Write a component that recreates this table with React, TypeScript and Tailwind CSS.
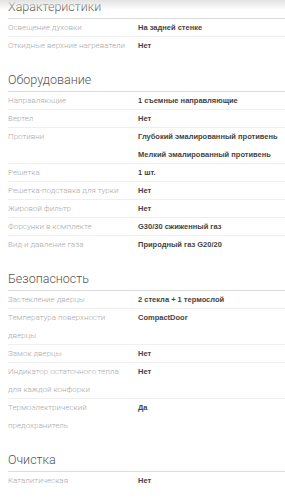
import React from "react";

type Row = { label: string[]; value: string[] };
type Section = { title: string; rows: Row[] };

const sections: Section[] = [
  {
    title: "Характеристики",
    rows: [
      { label: ["Освещение духовки"], value: ["На задней стенке"] },
      { label: ["Откидные верхние нагреватели"], value: ["Нет"] },
    ],
  },
  {
    title: "Оборудование",
    rows: [
      { label: ["Направляющие"], value: ["1 съемные направляющие"] },
      { label: ["Вертел"], value: ["Нет"] },
      {
        label: ["Противни"],
        value: ["Глубокий эмалированный противень", "Мелкий эмалированный противень"],
      },
      { label: ["Решетка"], value: ["1 шт."] },
      { label: ["Решетка-подставка для турки"], value: ["Нет"] },
      { label: ["Жировой фильтр"], value: ["Нет"] },
      { label: ["Форсунки в комплекте"], value: ["G30/30 сжиженный газ"] },
      { label: ["Вид и давление газа"], value: ["Природный газ G20/20"] },
    ],
  },
  {
    title: "Безопасность",
    rows: [
      { label: ["Застекление дверцы"], value: ["2 стекла + 1 термослой"] },
      { label: ["Температура поверхности", "дверцы"], value: ["CompactDoor"] },
      { label: ["Замок дверцы"], value: ["Нет"] },
      { label: ["Индикатор остаточного тепла", "для каждой конфорки"], value: ["Нет"] },
      { label: ["Термоэлектрический", "предохранитель"], value: ["Да"] },
    ],
  },
  {
    title: "Очистка",
    rows: [{ label: ["Каталитическая"], value: ["Нет"] }],
  },
];

export default function App() {
  return (
    <div className="relative w-[285px] h-[499px] overflow-hidden bg-white">
      <div className="pointer-events-none absolute left-0 right-0 top-0 h-[10px] bg-gradient-to-b from-[#e2e2e2] to-transparent" />
      <div className="pl-[8px]">
        {sections.map((s, si) => (
          <div key={s.title}>
            <div
              className={
                si === 0
                  ? "-mt-[3px] pb-[1px] leading-[20px] border-b border-[#dcdcdc] text-[12.5px] font-light text-[#555] font-['Roboto',sans-serif]"
                  : "pt-[15px] pb-[1px] leading-[20px] border-b border-[#dcdcdc] text-[12.5px] font-light text-[#555] font-['Roboto',sans-serif]"
              }
            >
              {s.title}
            </div>
            {s.rows.map((r, ri) => (
              <div
                key={ri}
                className={
                  ri === 0
                    ? "flex leading-[18px]"
                    : "flex leading-[18px] border-t border-[#efefef] -mt-px"
                }
              >
                <div className="w-[130px] shrink-0 whitespace-nowrap text-[8px] font-light text-[#aaaaaa] font-['Roboto',sans-serif]">
                  {r.label.map((l, i) => (
                    <div key={i}>{l}</div>
                  ))}
                </div>
                <div className="whitespace-nowrap text-[7.5px] font-bold text-[#444] font-['Liberation_Sans',Arial,sans-serif]">
                  {r.value.map((v, i) => (
                    <div key={i}>{v}</div>
                  ))}
                </div>
              </div>
            ))}
          </div>
        ))}
      </div>
    </div>
  );
}
